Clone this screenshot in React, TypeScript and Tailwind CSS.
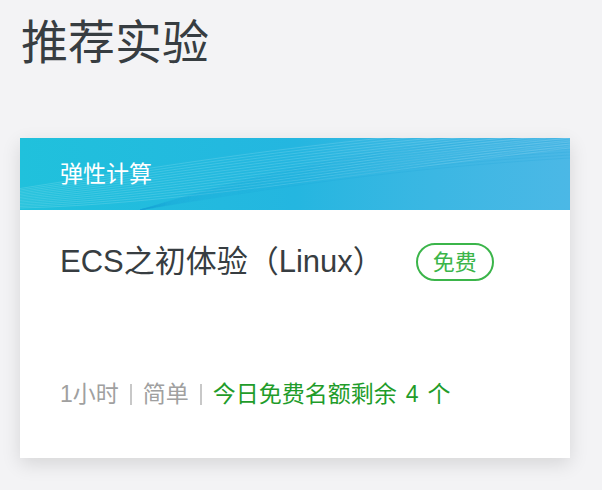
import React from 'react'

const font = { fontFamily: '"Liberation Sans", "Noto Sans CJK SC", "Noto Sans", sans-serif' }

const HeaderLines = () => (
  <svg
    className="absolute inset-0 h-full w-full"
    viewBox="0 0 550 72"
    preserveAspectRatio="none"
  >
    {Array.from({ length: 14 }).map((_, i) => (
      <path
        key={i}
        d={`M0 ${70 - i * 1.5} C 150 ${66 - i * 3}, 300 ${40 - i * 3}, 550 ${10 - i * 2}`}
        stroke="#ffffff"
        strokeOpacity={0.14}
        strokeWidth={1}
        fill="none"
      />
    ))}
    {Array.from({ length: 10 }).map((_, i) => (
      <path
        key={'b' + i}
        d={`M120 72 C 250 ${50 - i * 2}, 380 ${30 - i * 3}, 550 ${20 - i * 3}`}
        stroke="#1aa0d8"
        strokeOpacity={0.2}
        strokeWidth={1}
        fill="none"
      />
    ))}
  </svg>
)

const App = () => {
  return (
    <div className="min-h-[490px] bg-[#f3f3f5] pt-[13px]" style={font}>
      <h1 className="pl-[21px] text-[47px] font-normal leading-[60px] text-[#373d41]">
        推荐实验
      </h1>
      <div className="ml-[20px] mt-[65px] w-[550px] bg-white shadow-[0_6px_18px_rgba(0,0,0,0.12)]">
        <div className="relative flex h-[72px] items-center overflow-hidden bg-gradient-to-r from-[#20c1dc] via-[#24b6e0] to-[#4bb8e6] px-[40px]">
          <HeaderLines />
          <span className="relative text-[23px] text-white">弹性计算</span>
        </div>
        <div className="flex h-[248px] flex-col px-[40px]">
          <div className="mt-[32px] flex items-center">
            <span className="text-[31px] leading-[40px] text-[#373d41]">
              ECS之初体验（Linux）
            </span>
            <span className="ml-[32px] flex h-[38px] w-[78px] items-center justify-center rounded-full border-2 border-[#3bb54a] text-[22px] text-[#3bb54a]">
              免费
            </span>
          </div>
          <div className="mt-auto mb-[49px] flex items-center text-[23px] leading-[30px]">
            <span className="text-[#a0a0a0]">1小时</span>
            <span className="mx-[11px] h-[21px] w-[2px] bg-[#c8c8c8]" />
            <span className="text-[#a0a0a0]">简单</span>
            <span className="mx-[11px] h-[21px] w-[2px] bg-[#c8c8c8]" />
            <span className="text-[#1f9c2a]">
              今日免费名额剩余<span className="mx-[9px]">4</span>个
            </span>
          </div>
        </div>
      </div>
    </div>
  )
}

export default App
